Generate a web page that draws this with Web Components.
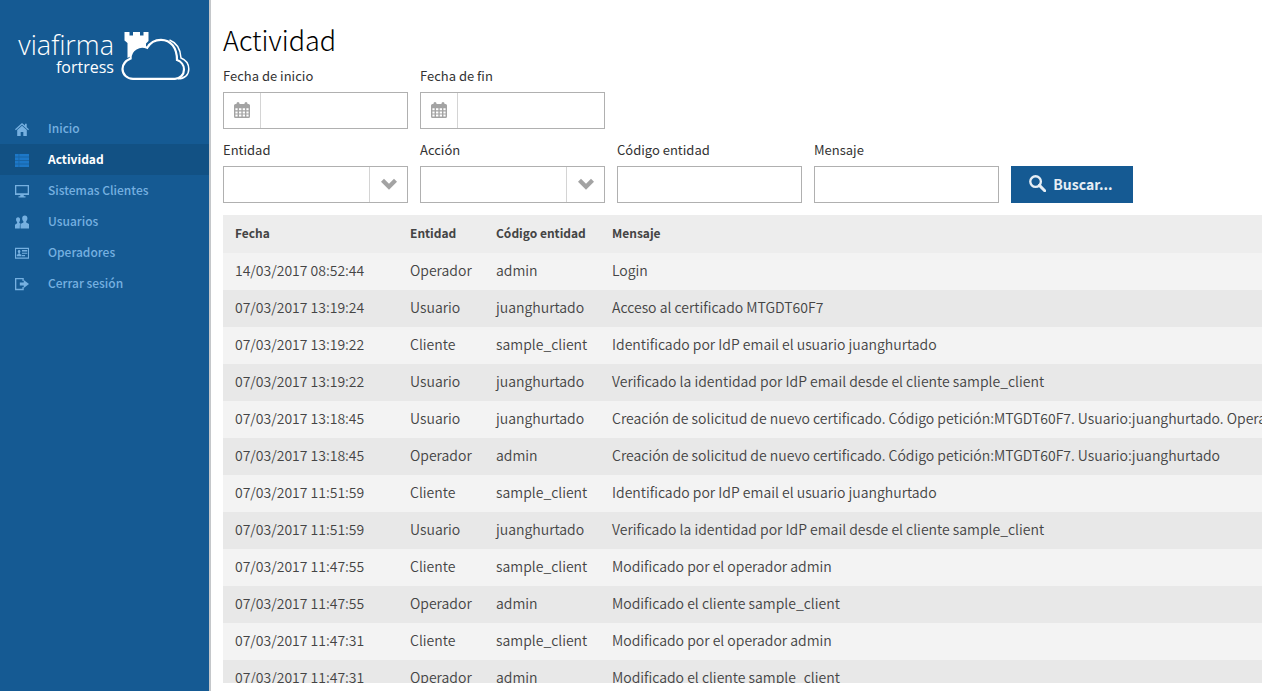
<!DOCTYPE html>
<html lang="es">
<head>
<meta charset="utf-8">
<meta name="viewport" content="width=device-width, initial-scale=1">
<title>Actividad</title>
<style>
  html, body { margin: 0; height: 100%; }
  body {
    font-family: "Noto Sans CJK SC", "Noto Sans", sans-serif;
    font-size: 14px;
    color: #444;
    background: #fff;
    --brand: #155a93;
    --brand-dark: #125184;
    --brand-soft: #76b0e0;
    --line: #b0b0b0;
    --line-soft: #d4d4d4;
    --muted: #a3a3a3;
  }
</style>
</head>
<body>
<app-shell>
  <side-nav slot="side">
    <nav-item icon="home">Inicio</nav-item>
    <nav-item icon="list" active>Actividad</nav-item>
    <nav-item icon="monitor">Sistemas Clientes</nav-item>
    <nav-item icon="users">Usuarios</nav-item>
    <nav-item icon="card">Operadores</nav-item>
    <nav-item icon="exit">Cerrar sesión</nav-item>
  </side-nav>
  <page-title>Actividad</page-title>
  <field-row>
    <form-field kind="date" label="Fecha de inicio"></form-field>
    <form-field kind="date" label="Fecha de fin"></form-field>
  </field-row>
  <field-row>
    <form-field kind="select" label="Entidad"></form-field>
    <form-field kind="select" label="Acción"></form-field>
    <form-field kind="text" label="Código entidad"></form-field>
    <form-field kind="text" label="Mensaje"></form-field>
    <search-button>Buscar...</search-button>
  </field-row>
  <activity-table></activity-table>
</app-shell>

<script>
const define = (name, render) => customElements.define(name, class extends HTMLElement {
  connectedCallback() {
    if (this.shadowRoot) return;
    this.attachShadow({ mode: 'open' }).innerHTML = render(this);
  }
});

const ICONS = {
  home: '<path d="M8 1 0 8.200l1 1.200 7-6.200 7 6.200 1-1.200-2.600-2.300V2h-2v2.100zM8 4.300 2.500 9.200V16h4v-4.500h3V16h4V9.200z"/>',
  list: '<path d="M0 1h4v3H0zM5 1h11v3H5zM0 5h4v3H0zM5 5h11v3H5zM0 9h4v3H0zM5 9h11v3H5zM0 13h4v3H0zM5 13h11v3H5z"/><path d="M0 1h16v15H0z" opacity=".5"/>',
  monitor: '<path fill-rule="evenodd" d="M0 1h16v11.500H0zM1.500 2.500v8h13v-8zM6 12.500h4V14h2v1.500H4V14h2z"/>',
  users: '<path d="M3.500 2.500c1.600 0 2.300 1.100 2.300 2.500S5.200 7.600 4.900 8v1.200l1.500.6C5.600 10.500 5.500 12 5.500 15.500H0V11l2.400-1.500V8C1.700 7.300 1.200 6.200 1.200 5c0-1.400.7-2.500 2.300-2.500zM11.200.5c2 0 3 1.400 3 3.200 0 1.500-.6 2.700-1.400 3.500v1.500L16 10.300v5.200H6.300v-5.200l3.300-1.600V7.200C8.700 6.400 8.200 5.200 8.200 3.700c0-1.800 1-3.200 3-3.200z"/>',
  card: '<path fill-rule="evenodd" d="M0 2h16v12.500H0zM1.200 3.400v9.700h13.600V3.400z"/><path d="M2 11.800V10l2-1V8c-.5-.4-.8-1-.8-1.700 0-1 .6-1.700 1.500-1.700s1.500.7 1.500 1.700c0 .7-.3 1.300-.8 1.700v1l2 1v1.800zM8 4.600h6v1.600H8zM8 7.600h6v1.300H8zM8 10.300h3.500v1.400H8z"/>',
  exit: '<path d="M0 1h10v3.500H8.500v-2h-7v11h7v-2H10V15H0z"/><path d="M5.500 6.200H10V3.500L16 8l-6 4.500V9.800H5.500z"/>',
  calendar: '<path fill-rule="evenodd" d="M2.500 2V1.500a1.500 1.500 0 0 1 3 0V2h5v-.5a1.500 1.500 0 0 1 3 0V2h1q1.500 0 1.500 1.500v11q0 1.500-1.500 1.500h-13Q0 16 0 14.500v-11Q0 2 1.500 2zM1.400 6.200v2h2.200v-2zm3.600 0v2h2.400v-2zm3.700 0v2H11v-2zm3.700 0v2h2.200v-2zM1.400 9.400v2h2.200v-2zm3.600 0v2h2.400v-2zm3.700 0v2H11v-2zm3.700 0v2h2.200v-2zM1.400 12.600v2h2.200v-2zm3.600 0v2h2.400v-2zm3.700 0v2H11v-2zm3.700 0v2h2.200v-2z"/>',
  chevron: '<path d="M3 2.800 8 7.700l5-4.900 3 3-8 8-8-8z"/>',
  search: '<circle cx="6.200" cy="6.200" r="5" fill="none" stroke="currentColor" stroke-width="2.200"/><path d="m9.800 9.800 5 5" stroke="currentColor" stroke-width="2.800" stroke-linecap="round"/>'
};

define('ui-icon', el => `
  <style>
    :host { display: inline-block; width: 14px; height: 14px; flex: none; }
    svg { display: block; width: 100%; height: 100%; fill: currentColor; }
  </style>
  <svg viewBox="0 0 16 16" aria-hidden="true">${ICONS[el.getAttribute('name')]}</svg>`);

define('app-shell', () => `
  <style>
    :host { display: flex; height: 100vh; min-height: 320px; }
    main {
      flex: 1; min-width: 0; box-sizing: border-box;
      display: flex; flex-direction: column; gap: 12px;
      padding: 20px 10px 8px 12px;
    }
  </style>
  <slot name="side"></slot>
  <main><slot></slot></main>`);

define('brand-logo', () => `
  <style>
    :host {
      display: flex; gap: 7px; height: 82px; padding: 31px 0 0 16px;
      color: #fff; font-family: "Open Sans", sans-serif; font-weight: 300;
    }
    .name { width: 98px; text-align: right; }
    .top { display: block; font-size: 27px; line-height: 28px; }
    .sub { display: block; font-size: 16px; line-height: 17px; font-weight: 400; }
    svg { display: block; width: 70px; height: 50px; }
  </style>
  <span class="name"><span class="top">viafirma</span><span class="sub">fortress</span></span>
  <svg viewBox="0 0 70 50" aria-hidden="true">
    <path fill="#fff" d="M3.500 1h5v3.500h3.500V1h7v3.500h3.500V1h5v9l-2.500 2.500V16C21.500 15 18 15.500 15 17.500c-3 2-4.500 4.500-5 7.500L6.500 27V12l-3-2.500z"/>
    <path fill="none" stroke="#fff" stroke-width="2.200" d="M12 47.800h42c5 0 9-4 9-9.300 0-4.500-3-8.200-7-9.500C56 17 50 8.800 40 8.800c-6 0-11 3-13.800 8C23.500 15.500 19 15 15 17.500c-4 2.500-5.700 6-5.400 10C5 29.500 1.500 33 1.500 38c0 5.600 4.700 9.800 10.500 9.800z"/>
    <path fill="none" stroke="#fff" stroke-width="1.500" d="M48.500 9C55 11.500 59.500 18 60 27c4.800 2 7.800 6 7.800 11 0 6-4.300 9.800-10.800 9.800"/>
  </svg>`);

define('side-nav', () => `
  <style>
    :host {
      display: block; flex: none; width: 209px;
      background: var(--brand); border-right: 2px solid #c4c7ca;
    }
    nav { display: flex; flex-direction: column; }
  </style>
  <brand-logo></brand-logo>
  <nav><slot></slot></nav>`);

define('nav-item', el => `
  <style>
    :host { display: block; color: var(--brand-soft); }
    :host([active]) { background: var(--brand-dark); color: #1d78c8; }
    a {
      display: flex; align-items: center; gap: 19px; box-sizing: border-box;
      height: 31px; padding-left: 15px;
      color: inherit; text-decoration: none; font-size: 12px; font-weight: 500;
    }
    span { padding-bottom: 3px; }
    :host([active]) span { color: #fff; font-weight: 700; }
  </style>
  <a href="#"><ui-icon name="${el.getAttribute('icon')}"></ui-icon><span><slot></slot></span></a>`);

define('page-title', () => `
  <style>
    :host { display: block; }
    h1 { margin: 0 0 -5px; font-size: 27px; line-height: 40px; font-weight: 300; color: #000; }
  </style>
  <h1><slot></slot></h1>`);

define('field-row', () => `
  <style>
    :host { display: flex; flex-wrap: wrap; align-items: flex-end; gap: 12px; }
  </style>
  <slot></slot>`);

define('form-field', el => {
  const kind = el.getAttribute('kind');
  const control = {
    date: '<span class="addon start"><ui-icon name="calendar"></ui-icon></span><input id="control" type="text">',
    select: '<select id="control"><option></option></select><span class="addon end"><ui-icon name="chevron"></ui-icon></span>',
    text: '<input id="control" type="text">'
  }[kind];
  return `
  <style>
    :host { display: block; width: 185px; }
    label { display: block; margin-bottom: 7px; font-size: 13px; line-height: 18px; font-weight: 400; color: #333; }
    .box {
      display: flex; box-sizing: border-box; height: 37px;
      border: 1px solid var(--line); background: #fff;
    }
    input, select {
      flex: 1; min-width: 0; box-sizing: border-box; border: 0; margin: 0; padding: 0 10px;
      font: inherit; color: inherit; background: transparent; appearance: none; border-radius: 0;
    }
    .addon { display: flex; align-items: center; justify-content: center; width: 36px; color: var(--muted); }
    .start { border-right: 1px solid var(--line-soft); }
    .end { border-left: 1px solid var(--line-soft); width: 37px; }
    .addon ui-icon { width: 16px; height: 16px; margin-bottom: 1px; }
  </style>
  <label for="control">${el.getAttribute('label')}</label>
  <div class="box">${control}</div>`;
});

define('search-button', () => `
  <style>
    :host { display: block; }
    button {
      display: flex; align-items: center; justify-content: center; gap: 7px;
      width: 122px; height: 37px; padding: 0 2px 2px 0; border: 0;
      background: var(--brand); color: #e6eef5;
      font: inherit; font-weight: 700; cursor: pointer;
    }
    ui-icon { width: 17px; height: 17px; }
  </style>
  <button type="button"><ui-icon name="search"></ui-icon><slot></slot></button>`);

const ROWS = [
  ['14/03/2017 08:52:44', 'Operador', 'admin', 'Login'],
  ['07/03/2017 13:19:24', 'Usuario', 'juanghurtado', 'Acceso al certificado MTGDT60F7'],
  ['07/03/2017 13:19:22', 'Cliente', 'sample_client', 'Identificado por IdP email el usuario juanghurtado'],
  ['07/03/2017 13:19:22', 'Usuario', 'juanghurtado', 'Verificado la identidad por IdP email desde el cliente sample_client'],
  ['07/03/2017 13:18:45', 'Usuario', 'juanghurtado', 'Creación de solicitud de nuevo certificado. Código petición:MTGDT60F7. Usuario:juanghurtado. Operador'],
  ['07/03/2017 13:18:45', 'Operador', 'admin', 'Creación de solicitud de nuevo certificado. Código petición:MTGDT60F7. Usuario:juanghurtado'],
  ['07/03/2017 11:51:59', 'Cliente', 'sample_client', 'Identificado por IdP email el usuario juanghurtado'],
  ['07/03/2017 11:51:59', 'Usuario', 'juanghurtado', 'Verificado la identidad por IdP email desde el cliente sample_client'],
  ['07/03/2017 11:47:55', 'Cliente', 'sample_client', 'Modificado por el operador admin'],
  ['07/03/2017 11:47:55', 'Operador', 'admin', 'Modificado el cliente sample_client'],
  ['07/03/2017 11:47:31', 'Cliente', 'sample_client', 'Modificado por el operador admin'],
  ['07/03/2017 11:47:31', 'Operador', 'admin', 'Modificado el cliente sample_client']
];

define('activity-table', () => `
  <style>
    :host { display: block; flex: 1; min-height: 0; overflow: hidden; }
    table { width: 100%; table-layout: fixed; border-collapse: collapse; white-space: nowrap; }
    th, td { box-sizing: border-box; padding: 0 12px 3px; text-align: left; line-height: 20px; }
    th { height: 38px; padding-bottom: 2px; font-size: 12px; font-weight: 700; background: #ededed; }
    td { height: 37px; font-size: 14px; font-weight: 350; }
    tbody tr { background: #f3f3f3; }
    tbody tr:nth-child(even) { background: #e8e8e8; }
    .date { width: 175px; }
    .entity { width: 86px; }
    .code { width: 116px; }
  </style>
  <table>
    <thead><tr><th class="date">Fecha</th><th class="entity">Entidad</th><th class="code">Código entidad</th><th>Mensaje</th></tr></thead>
    <tbody>${ROWS.map(r => `<tr>${r.map(c => `<td>${c}</td>`).join('')}</tr>`).join('')}</tbody>
  </table>`);
</script>
</body>
</html>
